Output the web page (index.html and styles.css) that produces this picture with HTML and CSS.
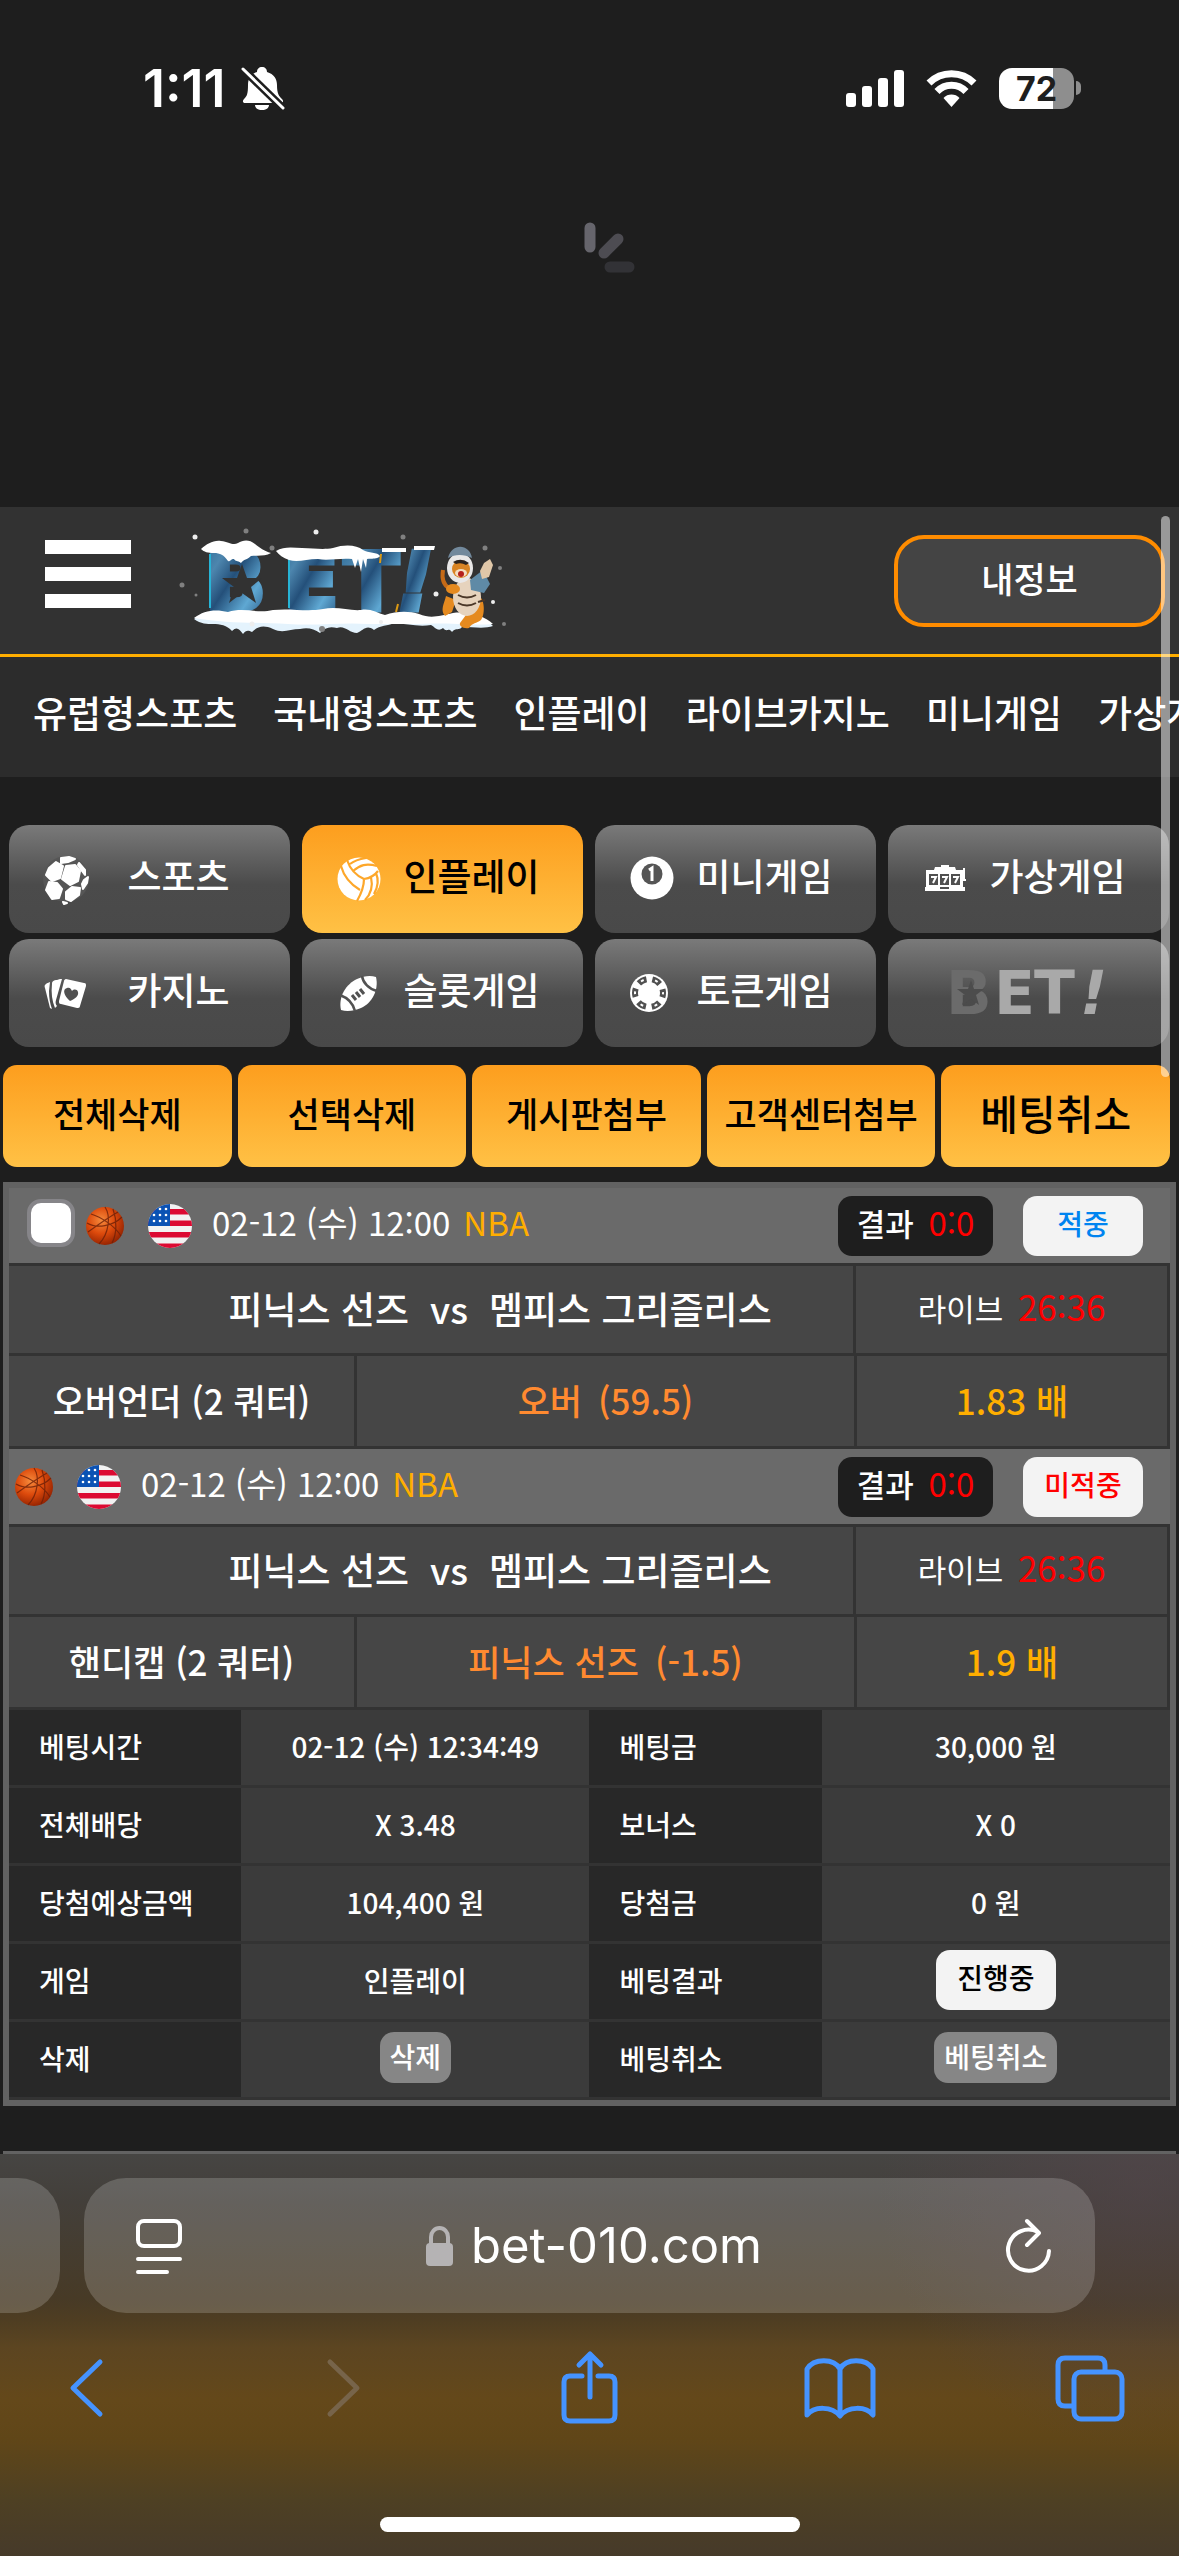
FILE: index.html
```html
<!DOCTYPE html>
<html lang="ko">
<head>
    <meta charset="UTF-8">
    <meta name="viewport" content="width=device-width, initial-scale=1.0">
    <title>베팅내역</title>
    <link rel="stylesheet" href="styles.css">
</head>
<body>
    <!-- shared icons -->
    <svg class="defs" width="0" height="0" aria-hidden="true">
        <defs>
            <radialGradient id="ballFill" cx="0.4" cy="0.35" r="0.7">
                <stop offset="0" stop-color="#f58a3c"/>
                <stop offset="0.5" stop-color="#dd4a0c"/>
                <stop offset="1" stop-color="#8e2000"/>
            </radialGradient>
            <clipPath id="round"><circle cx="23" cy="23" r="22"/></clipPath>
        </defs>
        <symbol id="basketball" viewBox="0 0 40 44">
            <circle cx="20" cy="22" r="19" fill="url(#ballFill)"/>
            <path d="M2 19C12 25 28 22 37 13M20 3C26 12 24 30 14 40M6 10C16 13 30 22 36 32M3 28C14 20 26 12 33 8M28 5C32 16 32 30 27 39" fill="none" stroke="#6b1f08" stroke-width="1.2" opacity="0.8"/>
        </symbol>
        <symbol id="flag" viewBox="0 0 46 46">
            <g clip-path="url(#round)">
                <path fill="#f2f2f2" d="M0 0H46V46H0z"/>
                <path fill="#dc0a32" d="M0 6h46v5.500H0zM0 17.500h46V23H0zM0 29h46v5.500H0zM0 40.500h46V46H0z"/>
                <path fill="#0b52b4" d="M0 0h23v23H0z"/>
                <g fill="#fff">
                    <circle cx="13" cy="6" r="1.300"/><circle cx="19" cy="6" r="1.300"/>
                    <circle cx="7" cy="12" r="1.300"/><circle cx="13" cy="12" r="1.300"/><circle cx="19" cy="12" r="1.300"/>
                    <circle cx="7" cy="18" r="1.300"/><circle cx="13" cy="18" r="1.300"/><circle cx="19" cy="18" r="1.300"/>
                </g>
            </g>
        </symbol>
    </svg>

    <div class="status-bar">
        <div class="status-left">
            <span class="clock">1:11</span>
            <svg width="42" height="44" viewBox="0 0 42 44">
                <path fill="#fff" d="M20 1c3 0 5 2 5 5 7 2 10 7 10 13 0 9 2 11 5 14 2 2 1 4-1 4H3c-2 0-3-2-1-4 3-3 4-5 4-14C6 13 9 8 15 6c0-3 2-5 5-5zM13 39h14c0 3-3 5-7 5s-7-2-7-5z"/>
                <path d="M1 3L41 42" stroke="#1e1e1e" stroke-width="8"/>
                <path d="M1 3L41 42" stroke="#fff" stroke-width="3" stroke-linecap="round"/>
            </svg>
        </div>
        <div class="status-right">
            <svg width="58" height="37" viewBox="0 0 58 37" fill="#fff">
                <rect y="23" width="10" height="14" rx="3"/>
                <rect x="16" y="16" width="10" height="21" rx="3"/>
                <rect x="32" y="8" width="10" height="29" rx="3"/>
                <rect x="48" width="10" height="37" rx="3"/>
            </svg>
            <svg width="51" height="37" viewBox="0 0 51 37" fill="none" stroke="#fff" stroke-width="7">
                <path d="M3 13a32 32 0 0 1 45 0"/>
                <path d="M11 21.500a20 20 0 0 1 29 0"/>
                <path fill="#fff" stroke="none" d="M17.500 28a11 11 0 0 1 16 0L25.500 37z"/>
            </svg>
            <div class="battery"><span class="battery-level">72</span><i class="battery-tip"></i></div>
        </div>
    </div>

    <div class="refresh">
        <svg width="90" height="90" viewBox="0 0 90 90" stroke-width="11" stroke-linecap="round">
            <path d="M45 6V25" stroke="#66656c"/>
            <path d="M59 31L73 17" stroke="#4d4c52"/>
            <path d="M65 45H84" stroke="#323236"/>
        </svg>
    </div>

    <div class="page">
        <header class="header">
            <button class="menu" type="button" aria-label="메뉴"><i></i><i></i><i></i></button>
            <a class="logo" href="#">
                <svg width="330" height="106" viewBox="0 0 330 106">
                    <defs>
                        <linearGradient id="ice" x1="0" y1="0" x2="1" y2="1">
                            <stop offset="0" stop-color="#2b6a96"/>
                            <stop offset="0.25" stop-color="#4d86ae"/>
                            <stop offset="0.45" stop-color="#24507a"/>
                            <stop offset="0.7" stop-color="#5fa8d3"/>
                            <stop offset="1" stop-color="#1c436e"/>
                        </linearGradient>
                    </defs>
                    <g class="logo-text" fill="url(#ice)" stroke="url(#ice)">
                        <text x="25" y="82">B</text>
                        <text x="104" y="82">E</text>
                        <text x="164" y="82">T</text>
                        <text x="217" y="82" font-style="oblique">!</text>
                    </g>
                    <path d="M30 26v54M109 26v54" stroke="#27b4d6" stroke-width="2"/>
                    <path fill="#323232" d="M62 36l5 14h15l-11 9 5 16-14-10-13 10 5-16-12-9h15z"/>
                    <path d="M218 76l-2 8M201 26l-1 9" stroke="#dd9a13" stroke-width="2"/>
                    <!-- snow -->
                    <path fill="#fff" d="M21 21c6-5 12-9 20-8 8 1 12 5 17 2 5-3 11-4 17 1 5 4 9 7 16 9-6 4-14 2-20 3-4 4-7 3-10 7-4-3-5-1-7-4-4 0-3 3-6 2-4-6-8-8-14-8-6 0-10-1-13-4zM96 23c8-5 18-3 26-3 12 0 20 2 31 0 12-4 24-3 30 2 5 3 15 2 17 6-3 4-10 2-13 3l-1 9-3-9-2 13-3-13-3 9-3-9c-14-1-24 2-34 0-12 0-20 4-29 1-6-2-10-5-13-9zM202 20h24v4h-24zM234 18h21l-1 4h-20z"/>
                    <path fill="#e4f3fd" d="M14 91c10-8 22-9 34-6 16-5 30 2 45-2 18-2 34 2 50-1 14-3 26 2 38 1 9-2 16 3 24 5 12-4 24-4 34-1 12 5 20 2 34-1 14-2 32 3 40 12-8 3-20 1-31 1-3 4-6 0-10 5-4-5-5 1-9-4-5 4-7 0-12-3-12 2-24-1-37-2-6 3-14 2-20 7-8-6-11 1-17 3-8 0-12-8-20-5-8-2-12 0-17 5-6-4-12-6-20-4-10 0-17 5-27 0-9-4-15-3-21 3-4-2-6-2-9 2-4-5-6-8-11-3-5-6-12-7-19-7-6 0-12 0-19-5z"/>
                    <path fill="#fff" d="M14 90c10-8 22-9 34-6 16-5 30 2 45-2 18-2 34 2 50-1 14-3 26 2 38 1 9-2 16 3 24 5 12-4 24-4 34-1 12 5 20 2 34-1 14-2 32 3 40 11-18 2-50-2-75 0-20 0-35 0-50 0-25-2-50 2-80 0-30-2-60 0-94-6z"/>
                    <!-- tiger -->
                    <path d="M269 60c-7-4-7-12-6-18" stroke="#c46a17" stroke-width="4" fill="none"/>
                    <path fill="#e58a1f" d="M266 68c-2 8-6 14-1 20l7-4 4-12zM288 66c18-5 18 20 13 26-5 4-8 2-12 8-6 1-10-2-9-5l6-8z"/>
                    <ellipse cx="287" cy="69" rx="14" ry="19" fill="#e6d3bd"/>
                    <path d="M278 67q9 5 18 0M278 75q9 5 18 0M297 62l6-2M298 74l7-2" stroke="#4a3728" stroke-width="2" fill="none"/>
                    <path fill="#5f8aa6" d="M290 52l13-10 7 14-6 9-13-3z"/>
                    <path fill="#e0c7a8" d="M300 43l4-8 6-4 3 6-4 12-7 2z"/>
                    <ellipse cx="280" cy="40" rx="13" ry="15" fill="#e9e8e8"/>
                    <path fill="#72899c" d="M268 30c4-16 22-14 24 0-8-4-17-4-24 0z"/>
                    <ellipse cx="281" cy="41" rx="9" ry="9" fill="#d98424"/>
                    <path fill="#2c2420" d="M273 34q8-5 16 1l-3 2q-5-3-10-1z"/>
                    <ellipse cx="281" cy="45" rx="6" ry="4" fill="#f3ddc2"/>
                    <ellipse cx="281" cy="46" rx="3" ry="3" fill="#b5201b"/>
                    <ellipse cx="273" cy="61" rx="7" ry="5" fill="#e58a1f"/>
                    <g fill="#eee">
                        <circle cx="15" cy="9" r="2.500"/><circle cx="136" cy="4" r="2.500"/><circle cx="256" cy="66" r="2.500"/>
                        <circle cx="313" cy="74" r="2"/><circle cx="72" cy="96" r="2.500"/><circle cx="201" cy="94" r="2"/>
                    </g>
                    <g fill="#808080">
                        <circle cx="66" cy="3" r="2.500"/><circle cx="92" cy="20" r="2.500"/><circle cx="223" cy="9" r="2.500"/>
                        <circle cx="305" cy="20" r="2.500"/><circle cx="320" cy="40" r="2"/><circle cx="2" cy="57" r="2.500"/>
                        <circle cx="16" cy="67" r="1.500"/><circle cx="142" cy="101" r="3"/><circle cx="324" cy="96" r="2"/>
                    </g>
                </svg>
            </a>
            <button class="my-info" type="button">내정보</button>
        </header>

        <nav class="nav">
            <a href="#">유럽형스포츠</a>
            <a href="#">국내형스포츠</a>
            <a href="#">인플레이</a>
            <a href="#">라이브카지노</a>
            <a href="#">미니게임</a>
            <a href="#">가상게임</a>
        </nav>

        <div class="games">
            <button class="game" type="button">
                <svg width="58" height="58" viewBox="0 0 58 58">
                    <circle cx="29" cy="29" r="23" fill="#565656"/>
                    <g fill="#fff" stroke="#fff" stroke-width="2" stroke-linejoin="round">
                        <path d="M29 16l9-1 5 6-2 10-8 4-8-6z"/>
                        <path d="M12 18l7-6 7 4-3 12-8 3-6-6z"/>
                        <path d="M12 32l8 1 5 6-3 9-7 1-6-9z"/>
                        <path d="M29 42l6-5 8 1-1 7-8 6-5-2z"/>
                        <path d="M24 8l8-1 6 2-7 3-7 1z"/>
                        <path d="M42 13l6 7v5l-3-4-4-6z"/>
                        <path d="M47 30l4-3-1 6-4 6-1-5z"/>
                        <path d="M26 52l4 1-3 1z"/>
                    </g>
                </svg>
                <span>스포츠</span>
            </button>
            <button class="game active" type="button">
                <svg width="58" height="58" viewBox="0 0 58 58">
                    <circle cx="29" cy="29" r="21.500" fill="#fff"/>
                    <path fill="none" stroke="#fda72a" stroke-width="2.200" d="M17 10c3 9 8 15 17 19 0 8-3 15-7 22M11 16c3 11 9 18 19 24M23 21c7-6 13-8 24-5M34 29c7-1 11-4 14-8M20 14c5-4 10-5 16-6M41 27c2 9 0 17-6 23M46 23c3 7 2 14-2 21"/>
                </svg>
                <span>인플레이</span>
            </button>
            <button class="game" type="button">
                <svg width="58" height="58" viewBox="0 0 58 58">
                    <circle cx="29" cy="28" r="21.500" fill="#fff"/>
                    <circle cx="29" cy="24" r="10.500" fill="#555"/>
                    <path fill="none" stroke="#fff" stroke-width="3" d="M26 20l3-2v13"/>
                </svg>
                <span>미니게임</span>
            </button>
            <button class="game" type="button">
                <svg width="58" height="58" viewBox="0 0 58 58">
                    <path fill="#fff" d="M10 20h8l1-3h6v-2h8v2h6l1 3h7v17h2v4H9v-4h1z"/>
                    <path fill="#505050" d="M13 24h9v11h-9zM24 24h9v11h-9zM35 24h9v11h-9zM24 37h9v2h-9z"/>
                    <path fill="none" stroke="#fff" stroke-width="2" d="M15 27h5l-3 6M26 27h5l-3 6M37 27h5l-3 6M48 30v-12M47 30h3"/>
                </svg>
                <span>가상게임</span>
            </button>
            <button class="game" type="button">
                <svg width="58" height="58" viewBox="0 0 58 58">
                    <path fill="#fff" d="M29 15l18 4c2 0 2 1 2 3l-6 20c0 2-2 2-3 2l-16-4c-2 0-2-1-2-3l5-20c0-1 1-2 2-2z"/>
                    <path fill="#fff" d="M23 15h2l-6 21c-1 3 0 5 1 6l-2 2c-3-7-4-15-3-24 0-3 2-4 5-4zM13 18l-1 9c0 7 1 13 3 18l-2-1L8 24c-1-3 0-4 5-6z"/>
                    <path fill="#505050" d="M33 37c-6-5-8-12-3-13 3-1 4 1 5 3 2-2 5-2 6 1 1 4-3 7-8 9z"/>
                </svg>
                <span>카지노</span>
            </button>
            <button class="game" type="button">
                <svg width="58" height="58" viewBox="0 0 58 58">
                    <path fill="#fff" d="M11 46c-3-13 5-26 16-31 7-3 13-4 19-2 3 13-4 26-15 31-7 3-14 4-20 2z"/>
                    <path fill="none" stroke="#525252" stroke-width="2.500" d="M32 12c1 7 7 13 15 15M10 31c8 3 13 8 15 16"/>
                    <path fill="none" stroke="#525252" stroke-width="3" d="M22 31l4 5M26 28l4 5M30 25l4 5"/>
                </svg>
                <span>슬롯게임</span>
            </button>
            <button class="game" type="button">
                <svg width="58" height="58" viewBox="0 0 58 58">
                    <circle cx="26" cy="29" r="19" fill="#fff"/>
                    <circle cx="26" cy="29" r="14" fill="none" stroke="#505050" stroke-width="6" stroke-dasharray="8.660 6" stroke-dashoffset="4.330"/>
                    <circle cx="26" cy="29" r="14" fill="none" stroke="#fff" stroke-width="2" stroke-dasharray="3 11.660" stroke-dashoffset="1.500"/>
                </svg>
                <span>토큰게임</span>
            </button>
            <button class="game" type="button">
                <svg class="mark" width="170" height="58" viewBox="0 0 170 58">
                    <g class="mark-text">
                        <text x="2" y="50" fill="#6b6b6b">B</text>
                        <text x="50" y="50" fill="#a9a9a9">E</text>
                        <text x="90" y="50" fill="#a9a9a9">T</text>
                        <text x="136" y="50" fill="#a9a9a9" font-style="oblique">!</text>
                    </g>
                    <path fill="#4c4c4c" d="M27 16l3 9h10l-8 6 3 10-8-6-9 6 3-10-8-6h11z"/>
                </svg>
            </button>
        </div>

        <div class="actions">
            <button type="button">전체삭제</button>
            <button type="button">선택삭제</button>
            <button type="button">게시판첨부</button>
            <button type="button">고객센터첨부</button>
            <button class="large" type="button">베팅취소</button>
        </div>

        <section class="slip">
            <article class="bet">
                <div class="bet-head">
                    <input type="checkbox" aria-label="베팅 선택">
                    <svg width="40" height="44"><use href="#basketball"/></svg>
                    <svg class="flag" width="46" height="46"><use href="#flag"/></svg>
                    <time>02-12 (수) 12:00</time>
                    <span class="league">NBA</span>
                    <span class="result">결과 <b>0:0</b></span>
                    <span class="badge hit">적중</span>
                </div>
                <div class="match">
                    <div class="teams"><span class="home">피닉스 선즈</span><span class="vs">vs</span><span>멤피스 그리즐리스</span></div>
                    <div class="live">라이브 <b>26:36</b></div>
                </div>
                <div class="pick">
                    <div>오버언더 (2 쿼터)</div>
                    <div class="choice"><span>오버</span><span>(59.5)</span></div>
                    <div class="odds">1.83 배</div>
                </div>
            </article>

            <article class="bet">
                <div class="bet-head">
                    <svg width="40" height="44"><use href="#basketball"/></svg>
                    <svg class="flag" width="46" height="46"><use href="#flag"/></svg>
                    <time>02-12 (수) 12:00</time>
                    <span class="league">NBA</span>
                    <span class="result">결과 <b>0:0</b></span>
                    <span class="badge miss">미적중</span>
                </div>
                <div class="match">
                    <div class="teams"><span class="home">피닉스 선즈</span><span class="vs">vs</span><span>멤피스 그리즐리스</span></div>
                    <div class="live">라이브 <b>26:36</b></div>
                </div>
                <div class="pick">
                    <div>핸디캡 (2 쿼터)</div>
                    <div class="choice"><span>피닉스 선즈</span><span>(-1.5)</span></div>
                    <div class="odds">1.9 배</div>
                </div>
            </article>

            <table class="detail">
                <tr>
                    <th>베팅시간</th><td>02-12 (수) 12:34:49</td>
                    <th>베팅금</th><td>30,000 원</td>
                </tr>
                <tr>
                    <th>전체배당</th><td>X 3.48</td>
                    <th>보너스</th><td>X 0</td>
                </tr>
                <tr>
                    <th>당첨예상금액</th><td>104,400 원</td>
                    <th>당첨금</th><td>0 원</td>
                </tr>
                <tr>
                    <th>게임</th><td>인플레이</td>
                    <th>베팅결과</th><td><span class="badge">진행중</span></td>
                </tr>
                <tr>
                    <th>삭제</th><td><button type="button">삭제</button></td>
                    <th>베팅취소</th><td><button type="button">베팅취소</button></td>
                </tr>
            </table>
        </section>
        <section class="slip next"></section>

        <div class="scrollbar"></div>
    </div>

    <footer class="browser">
        <div class="address-row">
            <div class="tab-peek"></div>
            <div class="address">
                <button type="button" aria-label="페이지 메뉴">
                    <svg width="46" height="56" viewBox="0 0 46 56" fill="none" stroke="#fff" stroke-width="4" stroke-linecap="round">
                        <rect x="2" y="3" width="42" height="25" rx="6"/>
                        <path d="M2 41H44M2 54H31"/>
                    </svg>
                </button>
                <button class="url" type="button">
                    <svg width="27" height="40" viewBox="0 0 27 40">
                        <rect y="17" width="27" height="23" rx="4" fill="#b5b3b4"/>
                        <path d="M5 18v-7a8.500 9 0 0 1 17 0v7" fill="none" stroke="#b5b3b4" stroke-width="4"/>
                    </svg>
                    <span>bet-010.com</span>
                </button>
                <button type="button" aria-label="새로고침">
                    <svg width="46" height="56" viewBox="0 0 46 56" fill="none" stroke="#fff" stroke-width="4" stroke-linecap="round" stroke-linejoin="round">
                        <path d="M43 33A20.500 20.500 0 1 1 32 14M21 3l12 12-12 12"/>
                    </svg>
                </button>
            </div>
        </div>
        <div class="toolbar">
            <button type="button" aria-label="뒤로">
                <svg width="72" height="72" viewBox="0 0 72 72"><path d="M47 11L20 37l27 26"/></svg>
            </button>
            <button class="disabled" type="button" aria-label="앞으로" disabled>
                <svg width="72" height="72" viewBox="0 0 72 72"><path d="M27 11l27 26-27 26"/></svg>
            </button>
            <button type="button" aria-label="공유">
                <svg width="72" height="72" viewBox="0 0 72 72"><path d="M28 25H16q-6 0-6 6v33q0 6 6 6h39q6 0 6-6V31q0-6-6-6H44M36 46V3M25 14L36 3l11 11" /></svg>
            </button>
            <button type="button" aria-label="책갈피">
                <svg width="72" height="72" viewBox="0 0 72 72"><path d="M36 18C30 7 10 7 3 18V64C10 55 28 55 36 65C44 55 62 55 69 64V18C62 7 42 7 36 18zM36 18V64"/></svg>
            </button>
            <button type="button" aria-label="탭">
                <svg width="72" height="72" viewBox="0 0 72 72"><path d="M51 20V14q0-7-7-7H11q-7 0-7 7V48q0 7 7 7h8"/><rect x="20" y="21" width="48" height="47" rx="7"/></svg>
            </button>
        </div>
        <div class="home-indicator"></div>
    </footer>
</body>
</html>
```

FILE: styles.css
```css
* {
    box-sizing: border-box;
}

body {
    margin: 0;
    min-height: 100vh;
    display: flex;
    flex-direction: column;
    background-color: #1e1e1e;
    color: #fff;
    font-family: 'Noto Sans CJK KR', sans-serif;
    font-weight: 500;
    overflow-x: hidden;
}

button {
    border: 0;
    padding: 0;
    background: none;
    color: inherit;
    font: inherit;
}

svg {
    display: block;
    flex: none;
    overflow: visible;
}

.defs {
    position: absolute;
}

/* phone status bar */
.status-bar {
    display: flex;
    justify-content: space-between;
    align-items: center;
    height: 176px;
    padding: 0 98px 0 143px;
    font-family: Inter, sans-serif;
}

.status-left {
    display: flex;
    align-items: center;
    gap: 16px;
}

.clock {
    font-size: 52px;
    font-weight: 600;
}

.status-right {
    display: flex;
    align-items: center;
    gap: 22px;
}

.battery {
    display: flex;
    align-items: center;
    gap: 2px;
}

.battery-level {
    width: 75px;
    height: 41px;
    border-radius: 13px;
    background: linear-gradient(90deg, #fff 72%, #8e8e8e 72%);
    color: #1e1e1e;
    font-size: 34px;
    font-weight: 700;
    line-height: 41px;
    text-align: center;
}

.battery-tip {
    width: 5px;
    height: 14px;
    border-radius: 0 5px 5px 0;
    background-color: #8e8e8e;
}

.refresh {
    display: flex;
    justify-content: center;
    height: 331px;
    padding-top: 46px;
}

.page {
    position: relative;
}

.header {
    display: flex;
    align-items: center;
    height: 150px;
    padding: 0 14px 0 45px;
    background-color: #323232;
    border-bottom: 3px solid #ffae00;
}

.menu {
    display: flex;
    flex-direction: column;
    gap: 13px;
    width: 86px;
    margin-right: 49px;
    padding-bottom: 14px;
}

.menu i {
    height: 14px;
    background-color: #fff;
}

.logo-text {
    font-family: 'DejaVu Sans', sans-serif;
    font-size: 80px;
    font-weight: 700;
    stroke-width: 5px;
}

.my-info {
    width: 271px;
    height: 92px;
    margin-left: auto;
    padding-bottom: 6px;
    border: 4px solid #ff8c00;
    border-radius: 30px;
    background-color: #444;
    font-size: 35px;
}

.nav {
    display: flex;
    align-items: center;
    gap: 36px;
    height: 120px;
    padding: 0 33px 10px;
    background-color: #2c2c2c;
    overflow: hidden;
    white-space: nowrap;
}

.nav a {
    color: #fff;
    font-size: 37px;
    text-decoration: none;
}

.games {
    display: grid;
    grid-template-columns: repeat(4, 1fr);
    gap: 6px 12px;
    padding: 48px 10px 0 9px;
}

.game {
    display: flex;
    align-items: center;
    height: 108px;
    padding: 0 28px;
    border-radius: 20px;
    background: linear-gradient(#7a7a7a, #4b4b4b 55%, #494949);
    font-size: 37px;
}

.game span {
    flex: 1;
    padding-bottom: 8px;
    text-align: center;
}

.game.active {
    background: linear-gradient(#fd9e1e, #ffc145);
    color: #000;
}

.mark {
    margin: auto;
}

.mark-text {
    font-family: 'DejaVu Sans', sans-serif;
    font-size: 60px;
    font-weight: 700;
}

.actions {
    display: grid;
    grid-template-columns: repeat(5, 1fr);
    gap: 6px;
    padding: 18px 9px 15px 3px;
}

.actions button {
    height: 102px;
    padding-bottom: 8px;
    border-radius: 14px;
    background: linear-gradient(#fd9e1e, #ffc145);
    color: #000;
    font-size: 35px;
    white-space: nowrap;
}

.actions .large {
    font-size: 41px;
}

/* betting slip */
.slip {
    margin: 0 3px;
    border: 6px solid #626262;
    background-color: #333;
}

.slip.next {
    margin-top: 45px;
    border-width: 3px 0 0;
}

.bet-head {
    display: flex;
    align-items: center;
    height: 78px;
    padding-right: 27px;
    padding-left: 5px;
    background-color: #6a6a6a;
    border-bottom: 3px solid #333;
}

.bet-head input {
    appearance: none;
    width: 48px;
    height: 48px;
    margin: 0 10px 6px 13px;
    border: 4px solid #868589;
    border-radius: 14px;
    background-color: #fff;
}

.bet-head .flag {
    margin: 0 19px 0 22px;
}

.bet-head time,
.league {
    font-size: 33px;
    font-weight: 400;
    line-height: 48px;
    padding-bottom: 8px;
}

.league {
    margin-left: 13px;
    color: #ffae00;
}

.result {
    width: 155px;
    height: 60px;
    margin: 0 30px 0 auto;
    border-radius: 14px;
    background-color: #1e1e1e;
    font-size: 31px;
    line-height: 52px;
    text-align: center;
}

.result b {
    margin-left: 6px;
    color: #f00;
    font-size: 33px;
    font-weight: 400;
}

.badge {
    display: inline-block;
    width: 120px;
    height: 60px;
    border-radius: 14px;
    background-color: #f3f3f3;
    color: #000;
    font-size: 28px;
    line-height: 54px;
    text-align: center;
}

.badge.hit {
    color: #0084f0;
}

.badge.miss {
    color: #f00;
}

.match,
.pick {
    display: grid;
    column-gap: 3px;
    padding-right: 3px;
    border-bottom: 3px solid #333;
    text-align: center;
}

.match {
    grid-template-columns: 844fr 311fr;
    font-size: 37px;
    line-height: 84px;
}

.pick {
    grid-template-columns: 345fr 497fr 310fr;
    font-size: 35px;
    line-height: 87px;
}

.match > div,
.pick > div {
    padding-bottom: 3px;
    background-color: #464646;
}

.teams {
    display: grid;
    grid-template-columns: 400px 80px auto;
    text-align: left;
}

.teams .home {
    text-align: right;
}

.teams .vs {
    text-align: center;
}

.match .live {
    font-size: 31px;
    font-weight: 400;
}

.live b {
    margin-left: 6px;
    color: #f00;
    font-size: 35px;
    font-weight: 400;
    line-height: 42px;
}

.pick .choice {
    display: flex;
    justify-content: center;
    gap: 16px;
    color: #ff8a30;
}

.pick .odds {
    color: #ffae00;
}

.detail {
    width: 100%;
    border-spacing: 0;
    table-layout: fixed;
    font-size: 28px;
}

.detail th,
.detail td {
    height: 78px;
    padding: 0 0 4px;
    border-bottom: 3px solid #333;
    line-height: 42px;
}

.detail th {
    width: 20%;
    padding-left: 30px;
    background-color: #282828;
    font-weight: 500;
    text-align: left;
}

.detail td {
    width: 30%;
    background-color: #3b3b3b;
    text-align: center;
}

.detail .badge {
    line-height: 54px;
    vertical-align: middle;
}

.detail button {
    height: 51px;
    padding: 0 10px 4px;
    border-radius: 14px;
    background-color: #868686;
    vertical-align: middle;
}

.scrollbar {
    position: absolute;
    top: 9px;
    right: 9px;
    width: 9px;
    height: 561px;
    border-radius: 5px;
    background-color: rgba(255, 255, 255, 0.5);
}

/* browser bottom bar */
.browser {
    flex: 1;
    padding-top: 24px;
    background:
        radial-gradient(circle at 97% 8%, rgba(84, 70, 76, 0.6), transparent 22%),
        linear-gradient(#464543, #433f3a 12%, #473a26 36%, #4e3d22 41%, #5c4521 48%, #64481a 61%, #604618 71%, #4e4023 86%, #463a2a);
    font-family: Inter, sans-serif;
}

.address-row {
    display: flex;
    gap: 24px;
    padding-right: 84px;
}

.tab-peek {
    width: 60px;
    border-radius: 0 42px 42px 0;
    background-color: rgba(255, 255, 255, 0.18);
}

.address {
    flex: 1;
    display: flex;
    justify-content: space-between;
    align-items: center;
    height: 135px;
    padding: 0 43px 0 52px;
    border-radius: 42px;
    background-color: rgba(255, 255, 255, 0.18);
}

.url {
    display: flex;
    align-items: center;
    gap: 18px;
    font-size: 49px;
    font-weight: 400;
}

.toolbar {
    display: flex;
    justify-content: space-between;
    padding: 38px 53px 0;
}

.toolbar svg {
    fill: none;
    stroke: #4593ff;
    stroke-width: 5px;
    stroke-linecap: round;
    stroke-linejoin: round;
}

.toolbar .disabled svg {
    stroke: #77644a;
}

.home-indicator {
    width: 420px;
    height: 15px;
    margin: 94px auto 0;
    border-radius: 8px;
    background-color: #fff;
}
```
